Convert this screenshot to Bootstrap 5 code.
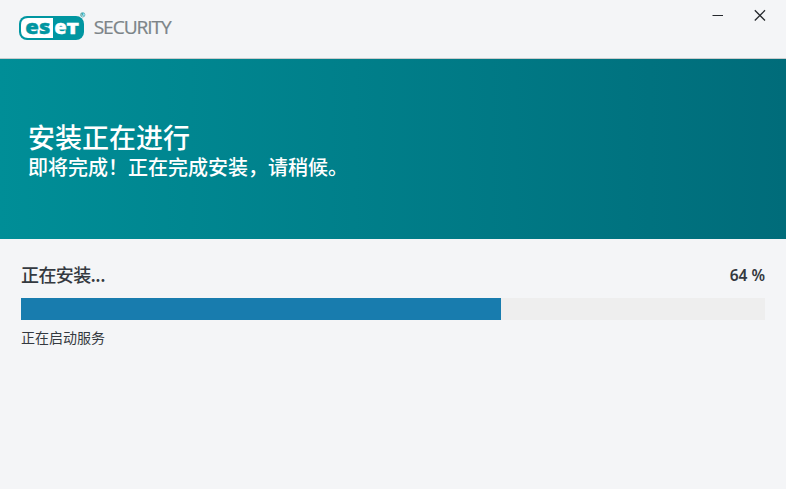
<!DOCTYPE html>
<html lang="zh-CN">
<head>
<meta charset="utf-8">
<meta name="viewport" content="width=device-width, initial-scale=1">
<title>ESET Security</title>
<link href="https://cdn.jsdelivr.net/npm/bootstrap@5.3.0/dist/css/bootstrap.min.css" rel="stylesheet">
<style>
body { background: #f4f5f7; color: #343940; font-family: "Noto Sans CJK SC", sans-serif; }
.titlebar { height: 59px; border-bottom: 1px solid #c9cccd; padding-left: 18px; }
.brand-logo { margin-top: 10px; }
.win-controls { margin-right: 5px; }
.win-btn { width: 42px; height: 30px; color: #25282d; }
.hero { height: 180px; padding: 62px 28px 0; background: linear-gradient(90deg, #008e97 0%, #007f8a 45%, #006c7a 100%); }
.hero-title { font-size: 27px; line-height: 32px; font-weight: 500; }
.hero-text { font-size: 20px; line-height: 28px; font-weight: 500; }
.status { padding: 22px 21px 0; }
.status-title { font-size: 18px; line-height: 26px; font-weight: 500; letter-spacing: -.6px; }
.percent { font: 600 15.5px/28px "Noto Sans", "Open Sans", sans-serif; }
.install-bar { height: 22px; margin-top: 9px; background: #eee; }
.install-bar .progress-bar { background: #187cae; }
.step { font-size: 14px; line-height: 20px; margin-top: 7px; }
</style>
</head>
<body class="overflow-hidden vh-100">
<header class="titlebar d-flex justify-content-between align-items-start">
  <svg class="brand-logo" width="160" height="34" viewBox="0 0 160 34" role="img" aria-label="ESET Security">
    <rect x="1" y="6" width="65" height="24" rx="8" fill="#0096a1"/>
    <path d="M10 8H35V28H10Q3 28 3 21V15Q3 8 10 8Z" fill="#fff"/>
    <g font-family="Open Sans, sans-serif" font-weight="800" font-size="20">
      <text x="7.3" y="24.2" fill="#0096a1" stroke="#0096a1" stroke-width=".4" textLength="25" lengthAdjust="spacingAndGlyphs">es</text>
      <text x="36.3" y="24.2" fill="#fff" stroke="#fff" stroke-width=".3" textLength="12.5" lengthAdjust="spacingAndGlyphs">e</text>
      <text x="48.6" y="24.2" fill="#fff" stroke="#fff" stroke-width=".3" font-size="16.5" textLength="12.5" lengthAdjust="spacingAndGlyphs">T</text>
    </g>
    <circle cx="64.7" cy="4.8" r="2.2" fill="none" stroke="#45aab2" stroke-width=".8"/>
    <text x="63.1" y="6.2" font-family="Open Sans, sans-serif" font-size="4" font-weight="700" fill="#0096a1">R</text>
    <text x="75.7" y="24" font-family="Open Sans, sans-serif" font-size="17.5" fill="#7c8488" stroke="#7c8488" stroke-width=".2" textLength="77" lengthAdjust="spacingAndGlyphs" letter-spacing="-1">SECURITY</text>
  </svg>
  <div class="win-controls d-flex">
    <button class="btn win-btn border-0 rounded-0 p-0 d-flex align-items-center justify-content-center" aria-label="最小化">
      <svg width="12" height="12" viewBox="0 0 12 12"><path d="M.5 6.5H11" stroke="currentColor"/></svg>
    </button>
    <button class="btn win-btn border-0 rounded-0 p-0 d-flex align-items-center justify-content-center" aria-label="关闭">
      <svg width="12" height="12" viewBox="0 0 12 12"><path d="M.8 1.3 11 11.5M11 1.3.8 11.5" stroke="currentColor" stroke-width="1.3"/></svg>
    </button>
  </div>
</header>
<section class="hero text-white">
  <h1 class="hero-title mb-0">安装正在进行</h1>
  <p class="hero-text mb-0">即将完成！正在完成安装，请稍候。</p>
</section>
<main class="status">
  <div class="d-flex justify-content-between">
    <h2 class="status-title mb-0">正在安装...</h2>
    <span class="percent">64 %</span>
  </div>
  <div class="progress install-bar rounded-0" role="progressbar" aria-valuenow="64" aria-valuemin="0" aria-valuemax="100">
    <div class="progress-bar" style="width: 64.5%"></div>
  </div>
  <p class="step mb-0">正在启动服务</p>
</main>
<script src="https://cdn.jsdelivr.net/npm/bootstrap@5.3.0/dist/js/bootstrap.bundle.min.js"></script>
</body>
</html>
